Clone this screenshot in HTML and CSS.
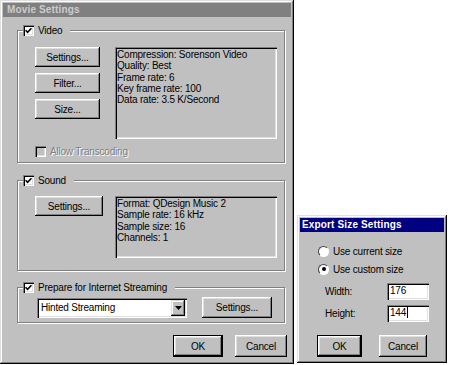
FILE: index.html
```html
<!DOCTYPE html>
<html lang="en">
<head>
    <meta charset="UTF-8">
    <meta name="viewport" content="width=device-width, initial-scale=1.0">
    <title>Movie Settings</title>
    <link rel="stylesheet" href="styles.css">
</head>
<body>
    <div class="desktop">
        <!-- Movie settings dialog -->
        <div class="window movie">
            <div class="titlebar inactive">Movie Settings</div>
            <div class="dialog-body">

                <div class="group group-video">
                    <div class="legend">
                        <span class="checkbox"><svg viewBox="0 0 7 7" width="7" height="7"><path d="M0.6 3.2 L2.6 5.3 L6.4 1.2" fill="none" stroke="#000" stroke-width="1.6"/></svg></span>
                        Video
                    </div>
                    <div class="group-row">
                        <div class="button-stack">
                            <button class="btn btn-side">Settings...</button>
                            <button class="btn btn-side">Filter...</button>
                            <button class="btn btn-side">Size...</button>
                        </div>
                        <div class="info info-video">
                            <div>Compression: Sorenson Video</div>
                            <div>Quality: Best</div>
                            <div>Frame rate: 6</div>
                            <div>Key frame rate: 100</div>
                            <div>Data rate: 3.5 K/Second</div>
                        </div>
                    </div>
                    <div class="check-row disabled">
                        <span class="checkbox off"></span>
                        <span class="etched">Allow Transcoding</span>
                    </div>
                </div>

                <div class="group group-sound">
                    <div class="legend">
                        <span class="checkbox"><svg viewBox="0 0 7 7" width="7" height="7"><path d="M0.6 3.2 L2.6 5.3 L6.4 1.2" fill="none" stroke="#000" stroke-width="1.6"/></svg></span>
                        Sound
                    </div>
                    <div class="group-row">
                        <button class="btn btn-sound">Settings...</button>
                        <div class="info info-sound">
                            <div>Format: QDesign Music 2</div>
                            <div>Sample rate: 16 kHz</div>
                            <div>Sample size: 16</div>
                            <div>Channels: 1</div>
                        </div>
                    </div>
                </div>

                <div class="group group-stream">
                    <div class="legend">
                        <span class="checkbox"><svg viewBox="0 0 7 7" width="7" height="7"><path d="M0.6 3.2 L2.6 5.3 L6.4 1.2" fill="none" stroke="#000" stroke-width="1.6"/></svg></span>
                        Prepare for Internet Streaming
                    </div>
                    <div class="stream-row">
                        <div class="select">
                            <span class="select-text">Hinted Streaming</span>
                            <span class="select-arrow"><svg viewBox="0 0 7 4" width="7" height="4"><path d="M0 0 H7 L3.5 4 Z" fill="#000"/></svg></span>
                        </div>
                        <button class="btn btn-stream">Settings...</button>
                    </div>
                </div>

                <div class="actions">
                    <button class="btn btn-default btn-ok">OK</button>
                    <button class="btn btn-cancel">Cancel</button>
                </div>
            </div>
        </div>

        <!-- Export size dialog -->
        <div class="window export">
            <div class="titlebar active">Export Size Settings</div>
            <div class="export-body">
                <div class="radio-row"><span class="radio"></span>Use current size</div>
                <div class="radio-row"><span class="radio on"></span>Use custom size</div>
                <div class="fields">
                    <div class="field-row">
                        <span class="field-label">Width:</span>
                        <span class="textbox">176</span>
                    </div>
                    <div class="field-row">
                        <span class="field-label">Height:</span>
                        <span class="textbox">144<span class="caret"></span></span>
                    </div>
                </div>
                <div class="export-actions">
                    <button class="btn btn-default btn-small-ok">OK</button>
                    <button class="btn btn-small-cancel">Cancel</button>
                </div>
            </div>
        </div>
    </div>
</body>
</html>
```

FILE: styles.css
```css
body {
    margin: 0;
    padding: 0;
    background-color: #ffffff;
    font-family: "Liberation Sans", Arial, sans-serif;
    font-size: 10px;
    letter-spacing: -0.2px;
    color: #000000;
}

.desktop {
    display: flex;
    align-items: flex-start;
}

/* Raised window frame */
.window {
    background-color: #c0c0c0;
    box-sizing: border-box;
    padding: 3px;
    box-shadow: inset -1px -1px #000000, inset 1px 1px #dfdfdf,
                inset -2px -2px #808080, inset 2px 2px #ffffff;
}

.movie {
    width: 294px;
    height: 364px;
}

.export {
    width: 150px;
    height: 148px;
    margin-top: 215px;
    margin-left: 3px;
}

.titlebar {
    height: 14px;
    line-height: 14px;
    font-weight: bold;
    letter-spacing: 0.15px;
    padding-left: 4px;
}

.titlebar.inactive {
    background-color: #808080;
    color: #cccccc;
}

.titlebar.active {
    background-color: #000080;
    color: #ffffff;
    padding-left: 2px;
}

.dialog-body {
    padding: 13px 0 0 14px;
}

/* Etched group boxes */
.group {
    position: relative;
    width: 268px;
    box-sizing: border-box;
    border: 1px solid #808080;
    box-shadow: inset 1px 1px #ffffff, 1px 1px #ffffff;
}

.legend {
    position: absolute;
    top: -7px;
    left: 5px;
    height: 12px;
    padding-right: 8px;
    display: flex;
    align-items: center;
    gap: 4px;
    background-color: #c0c0c0;
}

.group-video {
    padding: 16px 7px 5px 17px;
}

.group-sound {
    margin-top: 17px;
    padding: 15px 7px 12px 17px;
}

.group-stream {
    margin-top: 16px;
    padding: 9px 12px 4px 19px;
}

.group-row {
    display: flex;
    justify-content: space-between;
    align-items: flex-start;
}

.button-stack {
    display: flex;
    flex-direction: column;
    gap: 6px;
}

/* Raised push buttons */
.btn {
    font-family: "Liberation Sans", Arial, sans-serif;
    font-size: 10px;
    letter-spacing: -0.2px;
    color: #000000;
    background-color: #c0c0c0;
    border: none;
    padding: 0;
    margin: 0;
    box-sizing: border-box;
    box-shadow: inset -1px -1px #000000, inset 1px 1px #ffffff,
                inset -2px -2px #808080, inset 2px 2px #dfdfdf;
}

.btn-default {
    border: 1px solid #000000;
}

.btn-side {
    width: 65px;
    height: 20px;
}

.btn-sound {
    width: 68px;
    height: 20px;
}

.btn-stream {
    width: 70px;
    height: 21px;
}

.btn-ok {
    width: 50px;
    height: 22px;
}

.btn-cancel {
    width: 52px;
    height: 22px;
}

/* Sunken read-only info boxes */
.info {
    width: 162px;
    box-sizing: border-box;
    padding: 2px 2px;
    line-height: 11.3px;
    background-color: #c0c0c0;
    box-shadow: inset 1px 1px #808080, inset 2px 2px #000000,
                inset -1px -1px #ffffff, inset -2px -2px #dfdfdf;
}

.info-video {
    height: 92px;
}

.info-sound {
    height: 62px;
}

/* Checkboxes */
.checkbox {
    width: 11px;
    height: 11px;
    flex-shrink: 0;
    display: flex;
    align-items: center;
    justify-content: center;
    background-color: #ffffff;
    box-shadow: inset 1px 1px #808080, inset 2px 2px #000000,
                inset -1px -1px #ffffff, inset -2px -2px #dfdfdf;
}

.checkbox.off {
    background-color: #c0c0c0;
}

.check-row {
    margin-top: 7px;
    height: 11px;
    display: flex;
    align-items: center;
    gap: 4px;
}

.etched {
    color: #808080;
    text-shadow: 1px 1px #ffffff;
}

/* Streaming row */
.stream-row {
    display: flex;
    align-items: center;
    gap: 15px;
}

.select {
    width: 150px;
    height: 20px;
    box-sizing: border-box;
    padding: 2px;
    display: flex;
    align-items: center;
    background-color: #ffffff;
    box-shadow: inset 1px 1px #808080, inset 2px 2px #000000,
                inset -1px -1px #ffffff, inset -2px -2px #dfdfdf;
}

.select-text {
    flex: 1;
    padding-left: 2px;
}

.select-arrow {
    width: 14px;
    height: 16px;
    display: flex;
    align-items: center;
    justify-content: center;
    background-color: #c0c0c0;
    box-shadow: inset -1px -1px #000000, inset 1px 1px #dfdfdf,
                inset -2px -2px #808080, inset 2px 2px #ffffff;
}

.actions {
    width: 270px;
    margin-top: 12px;
    display: flex;
    justify-content: flex-end;
    gap: 12px;
}

/* Export size dialog */
.export-body {
    padding-top: 12px;
    display: flex;
    flex-direction: column;
}

.radio-row {
    height: 14px;
    padding-left: 18px;
    display: flex;
    align-items: center;
    gap: 4px;
}

.radio-row + .radio-row {
    margin-top: 4px;
}

.radio {
    position: relative;
    width: 11px;
    height: 11px;
    box-sizing: border-box;
    border-radius: 50%;
    background-color: #ffffff;
    border: 1px solid;
    border-color: #404040 #ffffff #ffffff #404040;
}

.radio.on::after {
    content: "";
    position: absolute;
    left: 2.5px;
    top: 2.5px;
    width: 4px;
    height: 4px;
    border-radius: 50%;
    background-color: #000000;
}

.fields {
    margin-top: 7px;
    display: flex;
    flex-direction: column;
    gap: 5px;
}

.field-row {
    height: 17px;
    padding-left: 25px;
    display: flex;
    align-items: center;
}

.field-label {
    width: 62px;
}

.textbox {
    width: 42px;
    height: 17px;
    box-sizing: border-box;
    padding: 2px 0 0 3px;
    display: flex;
    align-items: flex-start;
    background-color: #ffffff;
    box-shadow: inset 1px 1px #808080, inset 2px 2px #000000,
                inset -1px -1px #ffffff, inset -2px -2px #dfdfdf;
}

.caret {
    width: 1px;
    height: 11px;
    margin-left: 1px;
    background-color: #000000;
}

.export-actions {
    margin-top: 13px;
    padding-left: 17px;
    display: flex;
    gap: 17px;
}

.btn-small-ok {
    width: 45px;
    height: 22px;
}

.btn-small-cancel {
    width: 48px;
    height: 22px;
}
```
